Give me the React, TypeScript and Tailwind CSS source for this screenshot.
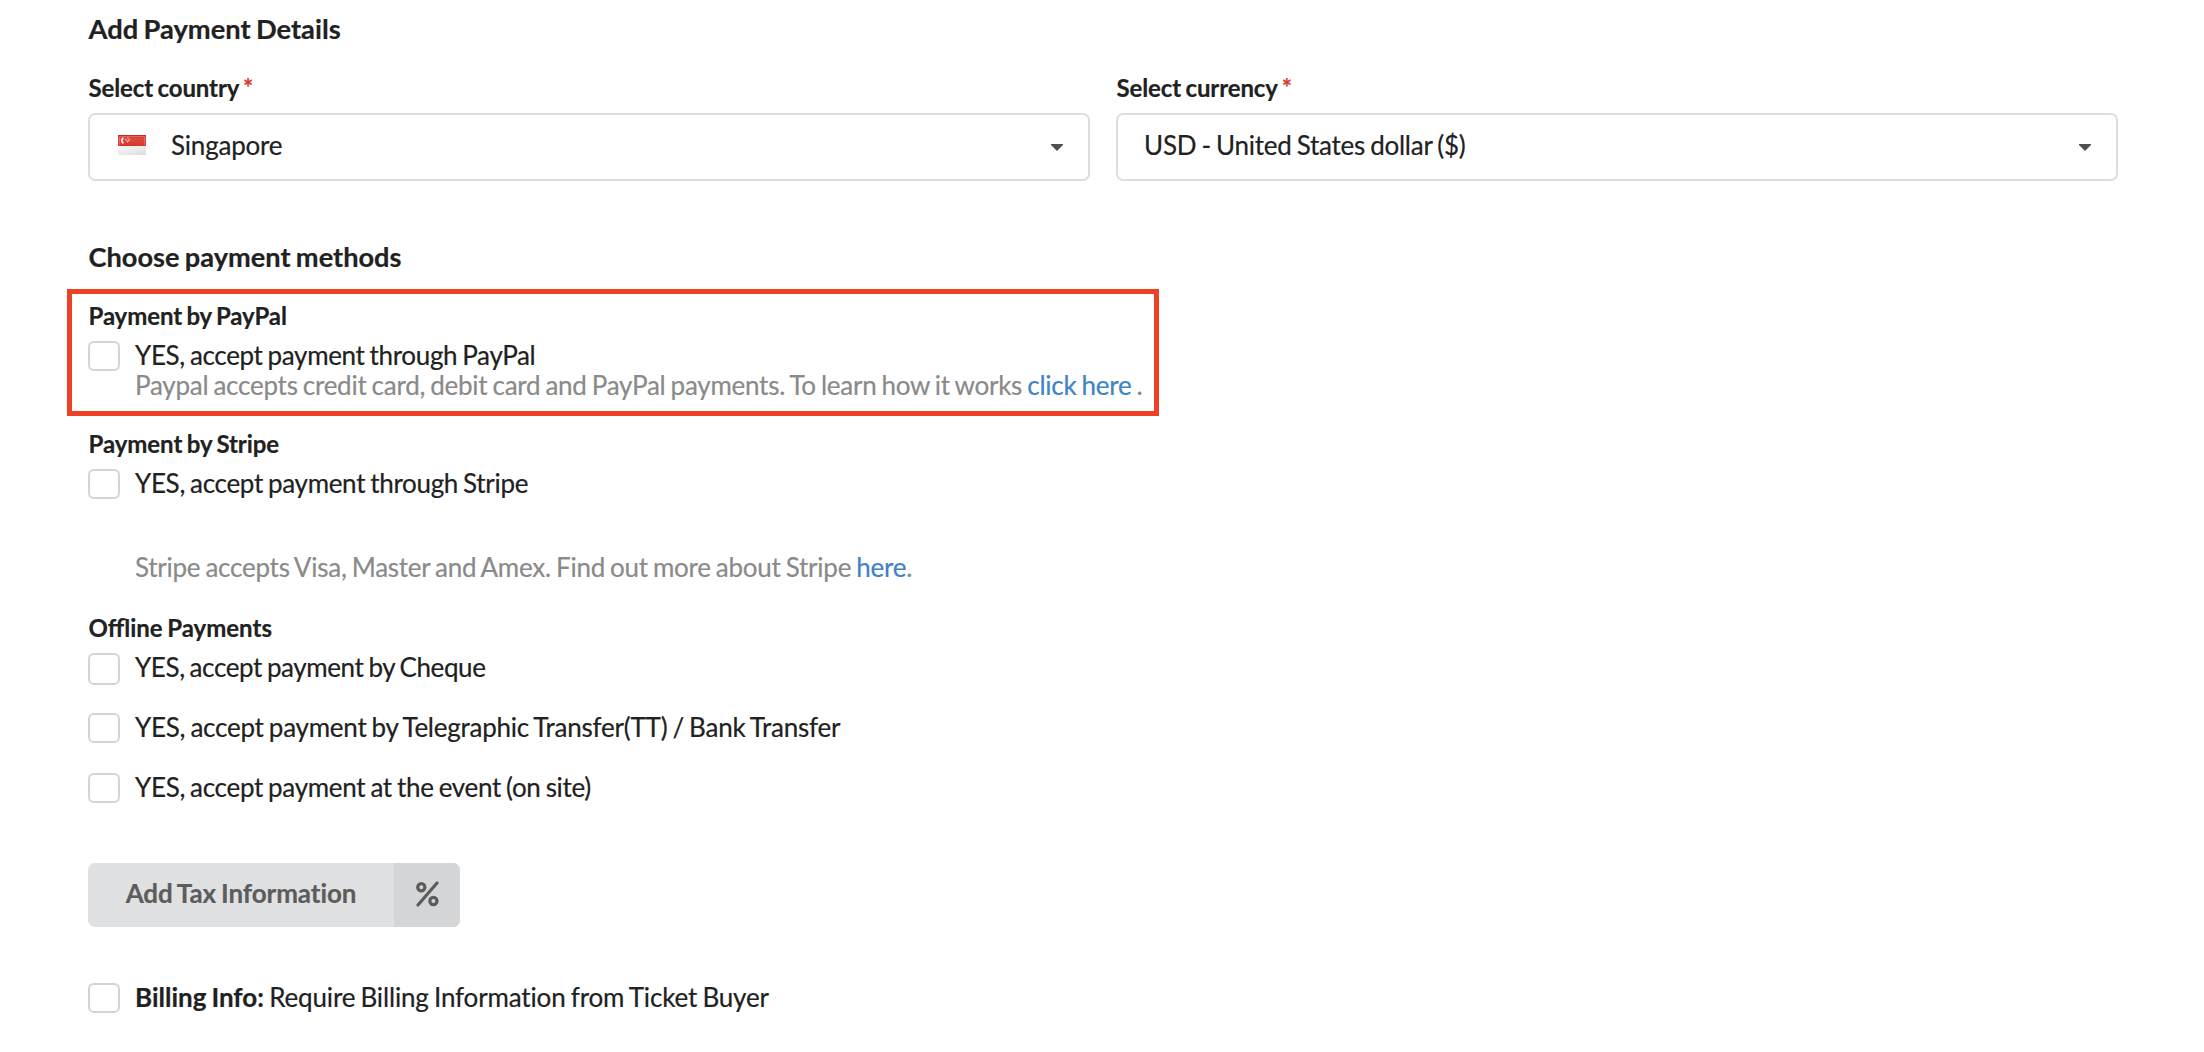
import React from 'react';

function Row({ children, className = '', box = 'h-[30px]' }: { children: React.ReactNode; className?: string; box?: string }) {
  return (
    <label className={'flex items-start gap-[15px] ' + className}>
      <span className={'w-8 shrink-0 rounded-[6px] border-2 border-[#d4d4d5] bg-white ' + box} />
      <span className="leading-[28px] whitespace-nowrap">{children}</span>
    </label>
  );
}

function Flag() {
  return (
    <svg className="mr-[25px] ml-[2px] -mt-1" width="28" height="20" viewBox="0 0 28 20">
      <defs>
        <linearGradient id="red" x1="0" y1="0" x2="0" y2="1">
          <stop offset="0" stopColor="#c9251c" />
          <stop offset="0.3" stopColor="#dc4a40" />
          <stop offset="1" stopColor="#d8352b" />
        </linearGradient>
        <linearGradient id="white" x1="0" y1="0" x2="1" y2="1">
          <stop offset="0" stopColor="#fafafa" />
          <stop offset="1" stopColor="#dcdcdc" />
        </linearGradient>
      </defs>
      <rect width="28" height="11" fill="url(#red)" />
      <rect y="11" width="28" height="9" fill="url(#white)" />
      <path d="M5.5 2.8A3 3 0 0 0 5.5 8.2" fill="none" stroke="#f9dcda" strokeWidth="2" />
      <path d="M7.5 4L9.5 6.8L12 4M9 3H11" fill="none" stroke="#f0aaa5" strokeWidth="1.2" />
      <path d="M1.5 10V1.5H26.5V10" fill="none" stroke="#e9857e" strokeOpacity="0.6" />
    </svg>
  );
}

function Select({ label, value, flag }: { label: string; value: string; flag?: boolean }) {
  return (
    <div className="flex-1">
      <div className="pl-[0.5px] text-[24px] leading-[32px] font-bold tracking-[-0.1px] [word-spacing:-1.4px]">
        {label} <span className="text-[#d33a30]">*</span>
      </div>
      <div className="mt-[9px] flex h-[68px] items-center rounded-[7px] border-2 border-[#dededf] pr-[25px] pl-[26px]">
        {flag && <Flag />}
        <span className={flag ? '-mt-1 tracking-[-0.2px]' : '-mt-1 tracking-[-0.24px]'}>{value}</span>
        <svg className="mt-px ml-auto" width="12" height="7" viewBox="0 0 12 7"><path d="M0 0H12V1L6 7L0 1Z" fill="#505050" /></svg>
      </div>
    </div>
  );
}

export default function App() {
  return (
    <main className="h-[1052px] w-[2204px] overflow-hidden bg-white pt-[13px] pl-[88px] font-[Lato,sans-serif] text-[26px] leading-[32px] text-[#212121] [-webkit-text-stroke:0.2px] [font-variant-ligatures:no-common-ligatures] [word-spacing:-1.3px]">
      <h1 className="pl-[0.5px] text-[27.3px] leading-[32px] font-bold">Add Payment Details</h1>
      <div className="mt-[27px] flex w-[2030px] gap-[26px]">
        <Select label="Select country" value="Singapore" flag />
        <Select label="Select currency" value="USD - United States dollar ($)" />
      </div>
      <h2 className="mt-[60px] pl-[0.5px] text-[27.2px] leading-[32px] font-bold">Choose payment methods</h2>
      <section className="mt-[16px] -ml-[21px] h-[127px] w-[1092px] border-[5px] border-[#ee4025] pt-[6px] pl-[16px]">
        <h3 className="pl-[0.5px] text-[24px] leading-[32px] font-bold tracking-[-0.1px]">Payment by PayPal</h3>
        <Row className="mt-[9px] tracking-[-0.34px]">YES, accept payment through PayPal</Row>
        <p className="-mt-[2px] pl-[47px] tracking-[-0.25px] whitespace-nowrap text-[#8a8a8a]">
          Paypal accepts credit card, debit card and PayPal payments. To learn how it works <a className="text-[#4183c4]">click here</a> .
        </p>
      </section>
      <h3 className="mt-[12px] pl-[0.5px] text-[24px] leading-[32px] font-bold tracking-[-0.06px]">Payment by Stripe</h3>
      <Row className="mt-[9px] tracking-[-0.31px]">YES, accept payment through Stripe</Row>
      <p className="mt-[52px] pl-[47px] tracking-[-0.25px] text-[#8a8a8a]">
        Stripe accepts Visa, Master and Amex. Find out more about Stripe <a className="text-[#4183c4]">here</a>.
      </p>
      <h3 className="mt-[29px] pl-[0.5px] text-[24px] leading-[32px] font-bold [font-variant-ligatures:common-ligatures]">Offline Payments</h3>
      <Row className="mt-[9px] tracking-[-0.4px]" box="h-8">YES, accept payment by Cheque</Row>
      <Row className="mt-[28px] tracking-[-0.24px]">YES, accept payment by Telegraphic Transfer(TT) / Bank Transfer</Row>
      <Row className="mt-[30px] tracking-[-0.3px]">YES, accept payment at the event (on site)</Row>
      <button className="mt-[60px] flex h-[64px] w-[372px] overflow-hidden rounded-[7px] bg-[#e0e1e2] font-bold text-[#5c5c5d]">
        <span className="flex h-full flex-1 items-center justify-center pb-1 tracking-[-0.08px] [word-spacing:-1.3px]">Add Tax Information</span>
        <span className="flex h-full w-[66px] items-center justify-center bg-[#d5d6d7]">
          <svg className="-mt-[3px]" width="23" height="26" viewBox="0 0 23 26" fill="none" stroke="currentColor" strokeWidth="3.2" strokeLinecap="round">
            <circle cx="5.3" cy="6.2" r="3.6" />
            <circle cx="17.4" cy="20" r="3.6" />
            <path d="M2 24L21 2" />
          </svg>
        </span>
      </button>
      <Row className="mt-[56px]"><b>Billing Info:</b><span className="tracking-[-0.15px]"> Require Billing Information from Ticket Buyer</span></Row>
    </main>
  );
}
